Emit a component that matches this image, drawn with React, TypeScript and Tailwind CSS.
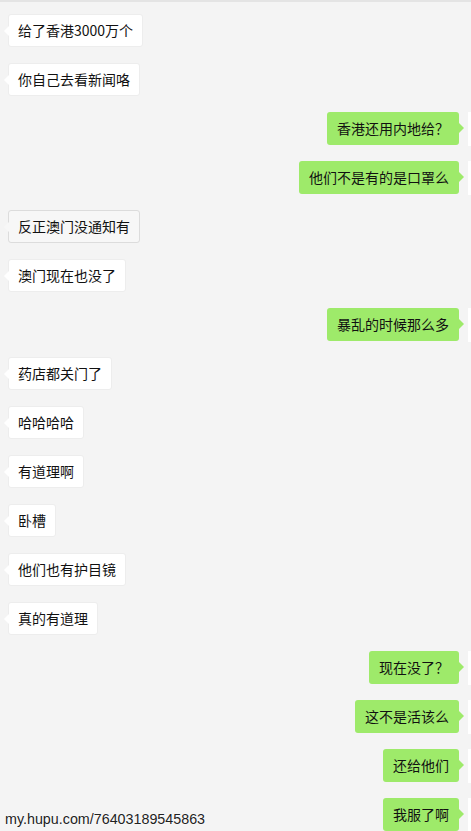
import React from "react";

type Msg = { text: string; me?: boolean; pressed?: boolean };

const msgs: Msg[] = [
  { text: "给了香港3000万个" },
  { text: "你自己去看新闻咯" },
  { text: "香港还用内地给？", me: true },
  { text: "他们不是有的是口罩么", me: true },
  { text: "反正澳门没通知有", pressed: true },
  { text: "澳门现在也没了" },
  { text: "暴乱的时候那么多", me: true },
  { text: "药店都关门了" },
  { text: "哈哈哈哈" },
  { text: "有道理啊" },
  { text: "卧槽" },
  { text: "他们也有护目镜" },
  { text: "真的有道理" },
  { text: "现在没了？", me: true },
  { text: "这不是活该么", me: true },
  { text: "还给他们", me: true },
  { text: "我服了啊", me: true },
];

const font = { fontFamily: '"Noto Sans CJK SC", "Noto Sans", sans-serif' };

function Row({ m }: { m: Msg }) {
  if (m.me) {
    return (
      <div className="flex justify-end items-start mr-[-31px] h-[33px]">
        <div className="relative h-[33px] flex items-center px-[10px] rounded-[3px] bg-[#9eea6a] text-[14px] text-[#111]" style={font}>
          {m.text}
          <svg className="absolute right-[-5px] top-[11px]" width="5" height="10" viewBox="0 0 5 10">
            <path d="M0 0 L5 5 L0 10 Z" fill="#9eea6a" />
          </svg>
        </div>
        <div className="ml-[9px] w-[34px] h-[34px] bg-white shrink-0" />
      </div>
    );
  }
  const bg = m.pressed ? "bg-[#f7f7f7] border-[#dcdcdc]" : "bg-white border-[#ededed]";
  const fill = m.pressed ? "#f7f7f7" : "#ffffff";
  return (
    <div className="flex justify-start h-[33px] pl-[8px]">
      <div className={`relative h-[33px] flex items-center px-[9px] rounded-[3px] border text-[14px] text-[#111] ${bg}`} style={font}>
        {m.text}
        <svg className="absolute left-[-5px] top-[11px]" width="5" height="10" viewBox="0 0 5 10">
          <path d="M5 0 L0 5 L5 10 Z" fill={fill} />
        </svg>
      </div>
    </div>
  );
}

export default function App() {
  return (
    <div className="relative w-[471px] h-[831px] overflow-hidden bg-[#f4f4f4]">
      <div className="h-[2px] bg-[#e4e4e4]" />
      <div className="flex flex-col gap-[16px] pt-[12px]">
        {msgs.map((m, i) => (
          <Row key={i} m={m} />
        ))}
      </div>
      <div
        className="absolute left-[5px] top-[811px] text-[14.3px] leading-[16px] text-[#222]"
        style={{ fontFamily: '"Liberation Sans", Arial, sans-serif', textShadow: "0 0 2px #fff, 0 0 1px #fff" }}
      >
        my.hupu.com/76403189545863
      </div>
    </div>
  );
}
